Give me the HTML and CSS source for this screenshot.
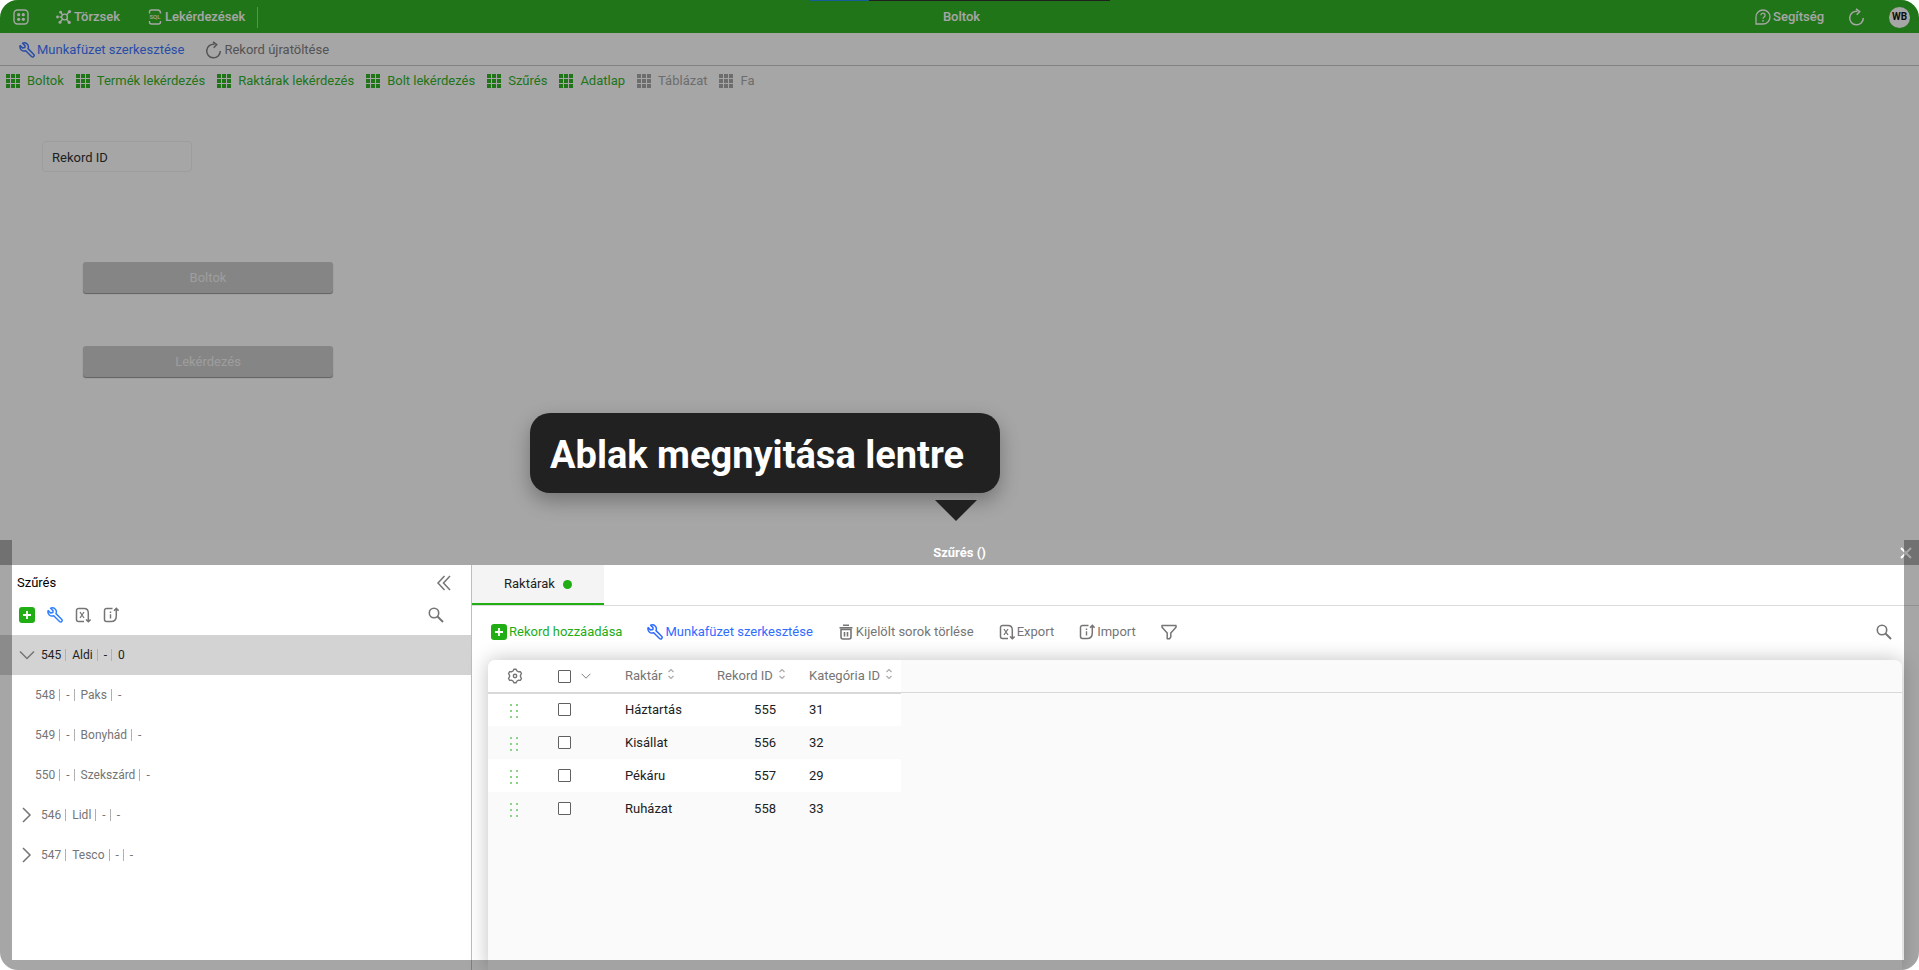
FILE: index.html
```html
<!DOCTYPE html>
<html lang="hu">
<head>
<meta charset="utf-8">
<title>Boltok</title>
<link rel="stylesheet" href="styles.css">
</head>
<body>
<svg class="sprite" aria-hidden="true">
  <symbol id="i-apps" viewBox="0 0 16 16"><rect x="1" y="1" width="14" height="14" rx="3.5" fill="none" stroke="currentColor" stroke-width="1.4"/><g fill="currentColor"><circle cx="5.7" cy="5.7" r="1.6"/><circle cx="10.3" cy="5.7" r="1.6"/><circle cx="5.7" cy="10.3" r="1.6"/><circle cx="10.3" cy="10.3" r="1.6"/></g></symbol>
  <symbol id="i-nodes" viewBox="0 0 16 16"><g fill="none" stroke="currentColor" stroke-width="1.4"><circle cx="8.5" cy="8" r="2.900"/><path d="M10.600 5.900 13 3M6.500 5.800 5 4M10.600 10.200l2 2.500M6.500 10.200 4.500 12.500M5.500 8H3.500"/></g><g fill="currentColor"><circle cx="13.5" cy="2.6" r="1.6"/><circle cx="4.6" cy="3.200" r="1.4"/><circle cx="13.2" cy="13.4" r="1.6"/><circle cx="4" cy="13.2" r="1.5"/><circle cx="1.5" cy="8" r="1.4"/></g></symbol>
  <symbol id="i-help" viewBox="0 0 16 16"><path d="M1 15V8a7 7 0 1 1 7 7z" fill="none" stroke="currentColor" stroke-width="1.3"/><path d="M5.900 6.300a2.100 2.100 0 1 1 3.300 1.700Q8 8.800 8 9.800" fill="none" stroke="currentColor" stroke-width="1.300"/><circle cx="8" cy="11.800" r=".9" fill="currentColor"/></symbol>
  <symbol id="i-reload" viewBox="0 0 16 18"><path d="M9 3.300A6.800 6.800 0 1 0 14.800 10M7.500.8l3.700 2.700-3 3.200" fill="none" stroke="currentColor" stroke-width="1.500"/></symbol>
  <symbol id="i-wrench" viewBox="0 0 16 16"><path d="M3.600 1.200A4.100 4.100 0 0 1 9 6.600L14.600 12.200A1.500 1.500 0 0 1 12.500 14.500L6.700 8.700A4.100 4.100 0 0 1 1.200 3.600L3.600 6 5.900 5.500 6 3.600z" fill="none" stroke="currentColor" stroke-width="1.500" stroke-linejoin="round"/></symbol>
  <symbol id="i-grid" viewBox="0 0 14 14"><path d="M0 0h4v4H0zM5 0h4v4H5zM10 0h4v4h-4zM0 5h4v4H0zM5 5h4v4H5zM10 5h4v4h-4zM0 10h4v4H0zM5 10h4v4H5zM10 10h4v4h-4z" fill="currentColor"/></symbol>
  <symbol id="i-plus" viewBox="0 0 16 16"><rect width="16" height="16" rx="3" fill="currentColor"/><path d="M8 4v8M4 8h8" stroke="#fff" stroke-width="1.800"/></symbol>
  <symbol id="i-export" viewBox="0 0 16 16"><path d="M9 14.500H3.500a2 2 0 0 1-2-2v-9a2 2 0 0 1 2-2H9q4.300 0 4.300 4.500V14M11 12.500l2.300 2.300 2.300-2.300" fill="none" stroke="currentColor" stroke-width="1.500"/><path d="m5 5 4 6M9 5l-4 6" stroke="currentColor" stroke-width="1.300"/></symbol>
  <symbol id="i-import" viewBox="0 0 16 16"><path d="M9.500 1.500h-6a2 2 0 0 0-2 2v9a2 2 0 0 0 2 2H8q5.300 0 5.300-5.500V2M11 3.700l2.300-2.300 2.300 2.300" fill="none" stroke="currentColor" stroke-width="1.500"/><path d="M7.500 4.500v1.400M7.500 7.200v4.300" stroke="currentColor" stroke-width="1.400"/></symbol>
  <symbol id="i-search" viewBox="0 0 16 16"><circle cx="6" cy="6" r="4.700" fill="none" stroke="currentColor" stroke-width="1.600"/><path d="m9.500 9.500 5.500 5.500" stroke="currentColor" stroke-width="1.900"/></symbol>
  <symbol id="i-collapse" viewBox="0 0 16 16"><path d="M8.500 1 2 8l6.500 7M14 1 7.500 8l6.500 7" fill="none" stroke="currentColor" stroke-width="1.500"/></symbol>
  <symbol id="i-down" viewBox="0 0 16 16"><path d="m1 4.500 7 7 7-7" fill="none" stroke="currentColor" stroke-width="1.500"/></symbol>
  <symbol id="i-right" viewBox="0 0 16 16"><path d="m4 1 7 7-7 7" fill="none" stroke="currentColor" stroke-width="1.500"/></symbol>
  <symbol id="i-trash" viewBox="0 0 16 16"><path d="M1.500 3.700h13M5 1.200h6M3 5.500V13q0 2 2 2h6q2 0 2-2V5.500zM6.500 8v4.500M9.500 8v4.500" fill="none" stroke="currentColor" stroke-width="1.600"/></symbol>
  <symbol id="i-filter" viewBox="0 0 16 16"><path d="M1 1.500h14v1.800L9.800 9v4l-1.300 1.700H6.200V9L1 3.300z" fill="none" stroke="currentColor" stroke-width="1.500" stroke-linejoin="round"/></symbol>
  <symbol id="i-gear" viewBox="0 0 16 16"><path d="M6 3 7 1.200h2L10 3l1.300.7 2-.1 1.200 1.900-1 1.700v1.600l1 1.700-1.200 1.900-2-.1L10 13l-1 1.800H7L6 13l-1.300-.7-2 .1-1.200-1.900 1-1.700V7.200l-1-1.700 1.200-1.900 2 .1z" fill="none" stroke="currentColor" stroke-width="1.400" stroke-linejoin="round"/><circle cx="8" cy="8" r="1.700" fill="none" stroke="currentColor" stroke-width="1.400"/></symbol>
  <symbol id="i-sort" viewBox="0 0 8 12"><path d="m1.500 4 2.500-2.500L6.500 4M1.500 8 4 10.500 6.500 8" fill="none" stroke="currentColor" stroke-width="1.200"/></symbol>
  <symbol id="i-drag" viewBox="0 0 10 14"><path d="M1 0h2v2H1zM7 0h2v2H7zM1 6h2v2H1zM7 6h2v2H7zM1 12h2v2H1zM7 12h2v2H7z" fill="currentColor"/></symbol>
  <symbol id="i-close" viewBox="0 0 12 12"><path d="m1 1 10 10M11 1 1 11" stroke="currentColor" stroke-width="2"/></symbol>
</svg>

<div class="page">
  <header class="topbar">
    <nav class="topbar-side">
      <button class="top-item" aria-label="Alkalmazások"><svg class="icon"><use href="#i-apps"/></svg></button>
      <button class="top-item"><svg class="icon"><use href="#i-nodes"/></svg>Törzsek</button>
      <button class="top-item"><svg class="icon" viewBox="0 0 16 16"><path d="M2.500 4.500V3Q2.500 1 4.500 1h6q3 0 3 3v.5M2.500 12v1Q2.500 15 4.500 15h7q2 0 2-2v-1" fill="none" stroke="currentColor" stroke-width="1.400"/><text x="8" y="10.400" font-size="6" text-anchor="middle" fill="currentColor">SQL</text></svg>Lekérdezések</button>
      <span class="top-divider"></span>
    </nav>
    <h1 class="topbar-title">Boltok</h1>
    <div class="topbar-side topbar-end">
      <button class="top-item"><svg class="icon"><use href="#i-help"/></svg>Segítség</button>
      <button class="top-item" aria-label="Frissítés"><svg class="icon-reload"><use href="#i-reload"/></svg></button>
      <button class="avatar">WB</button>
    </div>
    <span class="progress"></span>
  </header>

  <div class="record-bar">
    <button class="tool blue"><svg class="icon"><use href="#i-wrench"/></svg>Munkafüzet szerkesztése</button>
    <button class="tool"><svg class="icon-reload"><use href="#i-reload"/></svg>Rekord újratöltése</button>
  </div>

  <nav class="views">
    <a class="view" href="#"><svg class="icon-grid"><use href="#i-grid"/></svg>Boltok</a>
    <a class="view" href="#"><svg class="icon-grid"><use href="#i-grid"/></svg>Termék lekérdezés</a>
    <a class="view" href="#"><svg class="icon-grid"><use href="#i-grid"/></svg>Raktárak lekérdezés</a>
    <a class="view" href="#"><svg class="icon-grid"><use href="#i-grid"/></svg>Bolt lekérdezés</a>
    <a class="view" href="#"><svg class="icon-grid"><use href="#i-grid"/></svg>Szűrés</a>
    <a class="view" href="#"><svg class="icon-grid"><use href="#i-grid"/></svg>Adatlap</a>
    <a class="view muted" href="#"><svg class="icon-grid"><use href="#i-grid"/></svg>Táblázat</a>
    <a class="view muted" href="#"><svg class="icon-grid"><use href="#i-grid"/></svg>Fa</a>
  </nav>

  <main class="form">
    <input class="record-input" type="text" placeholder="Rekord ID" aria-label="Rekord ID">
    <div class="form-actions">
      <button class="form-button">Boltok</button>
      <button class="form-button">Lekérdezés</button>
    </div>
  </main>

  <section class="dialog" aria-labelledby="dialog-title">
    <header class="dialog-head">
      <h2 class="dialog-title" id="dialog-title">Szűrés ()</h2>
      <button class="dialog-close" aria-label="Bezárás"><svg class="icon-close"><use href="#i-close"/></svg></button>
    </header>
    <div class="dialog-body">
      <aside class="sidebar">
        <div class="sidebar-head">
          <h3 class="sidebar-title">Szűrés</h3>
          <button class="plain" aria-label="Összecsukás"><svg class="icon"><use href="#i-collapse"/></svg></button>
        </div>
        <div class="sidebar-tools">
          <button class="plain green" aria-label="Hozzáadás"><svg class="icon"><use href="#i-plus"/></svg></button>
          <button class="plain blue" aria-label="Szerkesztés"><svg class="icon"><use href="#i-wrench"/></svg></button>
          <button class="plain" aria-label="Export"><svg class="icon"><use href="#i-export"/></svg></button>
          <button class="plain" aria-label="Import"><svg class="icon"><use href="#i-import"/></svg></button>
          <button class="plain push" aria-label="Keresés"><svg class="icon"><use href="#i-search"/></svg></button>
        </div>
        <ul class="tree">
          <li class="node selected"><svg class="icon"><use href="#i-down"/></svg><span class="cells"><span>545</span><span>Aldi</span><span>-</span><span>0</span></span></li>
          <li class="node leaf"><span class="cells"><span>548</span><span>-</span><span>Paks</span><span>-</span></span></li>
          <li class="node leaf"><span class="cells"><span>549</span><span>-</span><span>Bonyhád</span><span>-</span></span></li>
          <li class="node leaf"><span class="cells"><span>550</span><span>-</span><span>Szekszárd</span><span>-</span></span></li>
          <li class="node"><svg class="icon"><use href="#i-right"/></svg><span class="cells"><span>546</span><span>Lidl</span><span>-</span><span>-</span></span></li>
          <li class="node"><svg class="icon"><use href="#i-right"/></svg><span class="cells"><span>547</span><span>Tesco</span><span>-</span><span>-</span></span></li>
        </ul>
      </aside>

      <div class="content">
        <div class="tabs"><button class="tab">Raktárak<span class="dot"></span></button></div>
        <div class="table-tools">
          <button class="tool green"><svg class="icon"><use href="#i-plus"/></svg>Rekord hozzáadása</button>
          <button class="tool blue"><svg class="icon"><use href="#i-wrench"/></svg>Munkafüzet szerkesztése</button>
          <button class="tool"><svg class="icon"><use href="#i-trash"/></svg>Kijelölt sorok törlése</button>
          <button class="tool"><svg class="icon"><use href="#i-export"/></svg>Export</button>
          <button class="tool"><svg class="icon"><use href="#i-import"/></svg>Import</button>
          <button class="tool" aria-label="Szűrő"><svg class="icon"><use href="#i-filter"/></svg></button>
          <button class="tool push" aria-label="Keresés"><svg class="icon"><use href="#i-search"/></svg></button>
        </div>
        <div class="card">
          <div class="card-line"></div>
          <table class="records">
            <colgroup><col class="c-drag"><col class="c-check"><col class="c-name"><col class="c-id"><col class="c-cat"></colgroup>
            <thead>
              <tr>
                <th><button class="plain" aria-label="Beállítások"><svg class="icon"><use href="#i-gear"/></svg></button></th>
                <th><span class="check-all"><input class="check" type="checkbox" aria-label="Összes kijelölése"><svg class="icon-small"><use href="#i-down"/></svg></span></th>
                <th>Raktár<svg class="icon-sort"><use href="#i-sort"/></svg></th>
                <th>Rekord ID<svg class="icon-sort"><use href="#i-sort"/></svg></th>
                <th>Kategória ID<svg class="icon-sort"><use href="#i-sort"/></svg></th>
              </tr>
            </thead>
            <tbody>
              <tr><td><svg class="icon-drag"><use href="#i-drag"/></svg></td><td><input class="check" type="checkbox" aria-label="Háztartás"></td><td>Háztartás</td><td class="num">555</td><td>31</td></tr>
              <tr><td><svg class="icon-drag"><use href="#i-drag"/></svg></td><td><input class="check" type="checkbox" aria-label="Kisállat"></td><td>Kisállat</td><td class="num">556</td><td>32</td></tr>
              <tr><td><svg class="icon-drag"><use href="#i-drag"/></svg></td><td><input class="check" type="checkbox" aria-label="Pékáru"></td><td>Pékáru</td><td class="num">557</td><td>29</td></tr>
              <tr><td><svg class="icon-drag"><use href="#i-drag"/></svg></td><td><input class="check" type="checkbox" aria-label="Ruházat"></td><td>Ruházat</td><td class="num">558</td><td>33</td></tr>
            </tbody>
          </table>
        </div>
      </div>
    </div>
    <div class="spotlight"></div>
    <div class="callout" role="tooltip">Ablak megnyitása lentre</div>
  </section>
</div>
</body>
</html>
```
FILE: styles.css
```css
* { box-sizing: border-box; }

body {
  margin: 0;
  background: #fff;
  color: #212121;
  font: 13px/16px Roboto, "Noto Sans", sans-serif;
}

button, input { font: inherit; color: inherit; }
button { border: 0; padding: 0; background: none; cursor: pointer; }
h1, h2, h3 { margin: 0; font-size: 13px; }
svg { display: block; flex: none; }

.sprite { position: absolute; width: 0; height: 0; }
.icon { width: 16px; height: 16px; }
.icon-reload { width: 17px; height: 18px; }
.icon-grid { width: 14px; height: 14px; }
.icon-close { width: 12px; height: 12px; }
.icon-small { width: 10px; height: 10px; }
.icon-sort { display: inline-block; width: 8px; height: 12px; margin-left: 5px; color: #aaa; }
.icon-drag { width: 10px; height: 14px; margin: 2px 0 0 21px; color: #8ed488; }

.green { color: #21ad14; }
.blue { color: #2f6bff; }
.push { margin-left: auto; }

.page {
  position: relative;
  display: flex;
  flex-direction: column;
  min-height: 100vh;
  overflow: hidden;
  border-radius: 18px;
  background: #fff;
}

/* Top bar */
.topbar {
  position: relative;
  display: grid;
  grid-template-columns: 1fr auto 1fr;
  align-items: center;
  height: 33px;
  padding: 1px 9px 0 13px;
  background: #21ad14;
  color: #fff;
}
.topbar-side { display: flex; align-items: center; gap: 27px; }
.topbar-end { justify-content: flex-end; gap: 24px; }
.top-item { display: flex; align-items: center; gap: 2px; font-weight: 500; }
.topbar-title { font-weight: 500; }
.top-divider { width: 1px; height: 21px; margin-left: -15px; background: #90d689; }
.avatar { width: 21px; height: 21px; border-radius: 50%; background: #fff; color: #000; font-size: 10px; font-weight: 700; }
.progress {
  position: absolute;
  top: 0;
  left: 809px;
  width: 301px;
  height: 1px;
  background: linear-gradient(90deg, #0f86e8 60px, #212121 60px);
}

/* Bars under the header */
.record-bar {
  display: flex;
  align-items: center;
  gap: 21px;
  height: 33px;
  padding: 1px 19px 0;
  border-bottom: 1px solid #c4c4c4;
}
.tool { display: flex; align-items: center; gap: 2px; color: #757575; }
.tool.green { color: #21ad14; }
.tool.blue { color: #2f6bff; }

.views { display: flex; align-items: center; gap: 12px; height: 30px; padding: 0 6px; }
.view { display: flex; align-items: center; gap: 7px; color: #21ad14; text-decoration: none; }
.view.muted { color: #a0a0a0; }

/* Form canvas */
.form { flex: 1; padding: 45px 42px; }
.record-input {
  display: block;
  width: 150px;
  height: 31px;
  padding: 1px 9px 0;
  border: 1px solid #f0f0f0;
  border-radius: 4px;
  background: transparent;
}
.record-input::placeholder { color: #212121; opacity: 1; }
.form-actions { display: flex; flex-direction: column; gap: 53px; width: 250px; margin: 90px 0 0 41px; }
.form-button {
  height: 31px;
  border-radius: 3px;
  background: #c8c8c8;
  color: #f1f1f1;
  box-shadow: 0 1px 1px #888;
}

/* Docked dialog */
.dialog { position: relative; display: flex; flex-direction: column; min-height: 430px; }
.dialog-head {
  display: flex;
  align-items: center;
  justify-content: center;
  height: 25px;
  background: #a7a7a7;
  color: #fff;
}
.dialog-close { position: absolute; top: 7px; right: 7px; }
.dialog-body { display: flex; flex: 1; }

.sidebar { width: 472px; border-right: 1px solid #bdbdbd; background: #fff; }
.sidebar-head { display: flex; align-items: center; justify-content: space-between; height: 36px; padding: 0 19px 0 17px; }
.sidebar-title { color: #000; font-weight: 400; }
.sidebar-tools { display: flex; gap: 12px; height: 34px; padding: 6px 27px 0 19px; }
.plain { display: block; height: 16px; color: #757575; }
.plain.green { color: #21ad14; }
.plain.blue { color: #2f80ff; }

.tree { margin: 0; padding: 0; list-style: none; font-size: 12px; }
.node { display: flex; align-items: center; gap: 6px; height: 40px; padding-left: 19px; color: #757575; }
.node.leaf { padding-left: 35px; }
.node.selected { background: #d3d3d3; color: #212121; }
.node.selected .icon { color: #757575; }
.cells { display: flex; }
.cells span { line-height: 12px; }
.cells span + span { margin-left: 4px; padding-left: 6px; border-left: 1px solid #b0b0b0; }

.content { display: flex; flex: 1; flex-direction: column; min-width: 0; }
.tabs { display: flex; height: 41px; border-bottom: 1px solid #dcdcdc; }
.tab {
  display: flex;
  align-items: center;
  gap: 8px;
  padding: 0 32px;
  border-bottom: 2px solid #21ad14;
  background: #f4f4f4;
}
.dot { width: 9px; height: 9px; border-radius: 50%; background: #21ad14; }
.table-tools { display: flex; align-items: center; gap: 25px; height: 54px; padding: 0 27px 2px 19px; }

.card {
  position: relative;
  flex: 1;
  margin: 0 17px 0 16px;
  border-radius: 7px 7px 0 0;
  background: #fafafa;
  box-shadow: 0 0 20px rgba(0, 0, 0, 0.25);
}
.card-line { position: absolute; top: 32px; right: 0; left: 0; height: 1px; background: #d8d8d8; }

.records { width: 413px; border-collapse: collapse; table-layout: fixed; }
.c-drag { width: 70px; }
.c-check { width: 67px; }
.c-name { width: 92px; }
.c-id { width: 92px; }
.c-cat { width: 92px; }
.records th { height: 33px; padding: 0; background: #fff; color: #757575; font-weight: 400; text-align: left; border-bottom: 1px solid #d8d8d8; white-space: nowrap; }
.records th:first-child { padding-left: 19px; border-top-left-radius: 7px; }
.records td { height: 33px; padding: 0; }
.records tbody tr:nth-child(odd) { background: #fff; }
.records .num { padding-right: 33px; text-align: right; }
.check-all { display: flex; align-items: center; gap: 10px; color: #757575; }
.check {
  display: block;
  width: 13px;
  height: 13px;
  margin: 0;
  appearance: none;
  border: 1px solid #616161;
  border-radius: 1px;
  background: #fff;
}

/* Tour highlight */
.spotlight {
  position: absolute;
  inset: 0 15px 10px 12px;
  box-shadow: 0 0 0 3000px rgba(33, 33, 33, 0.4);
  pointer-events: none;
}
.callout {
  position: absolute;
  bottom: calc(100% + 47px);
  left: 530px;
  padding: 22px 36px 18px 20px;
  border-radius: 20px;
  background: #212121;
  box-shadow: 0 8px 20px rgba(0, 0, 0, 0.3);
  color: #fff;
  font-size: 38px;
  font-weight: 700;
  line-height: 40px;
  white-space: nowrap;
}
.callout::after {
  content: "";
  position: absolute;
  top: calc(100% + 7px);
  right: 23px;
  border: 21px solid transparent;
  border-top: 21px solid #212121;
  border-bottom: 0;
}
```
